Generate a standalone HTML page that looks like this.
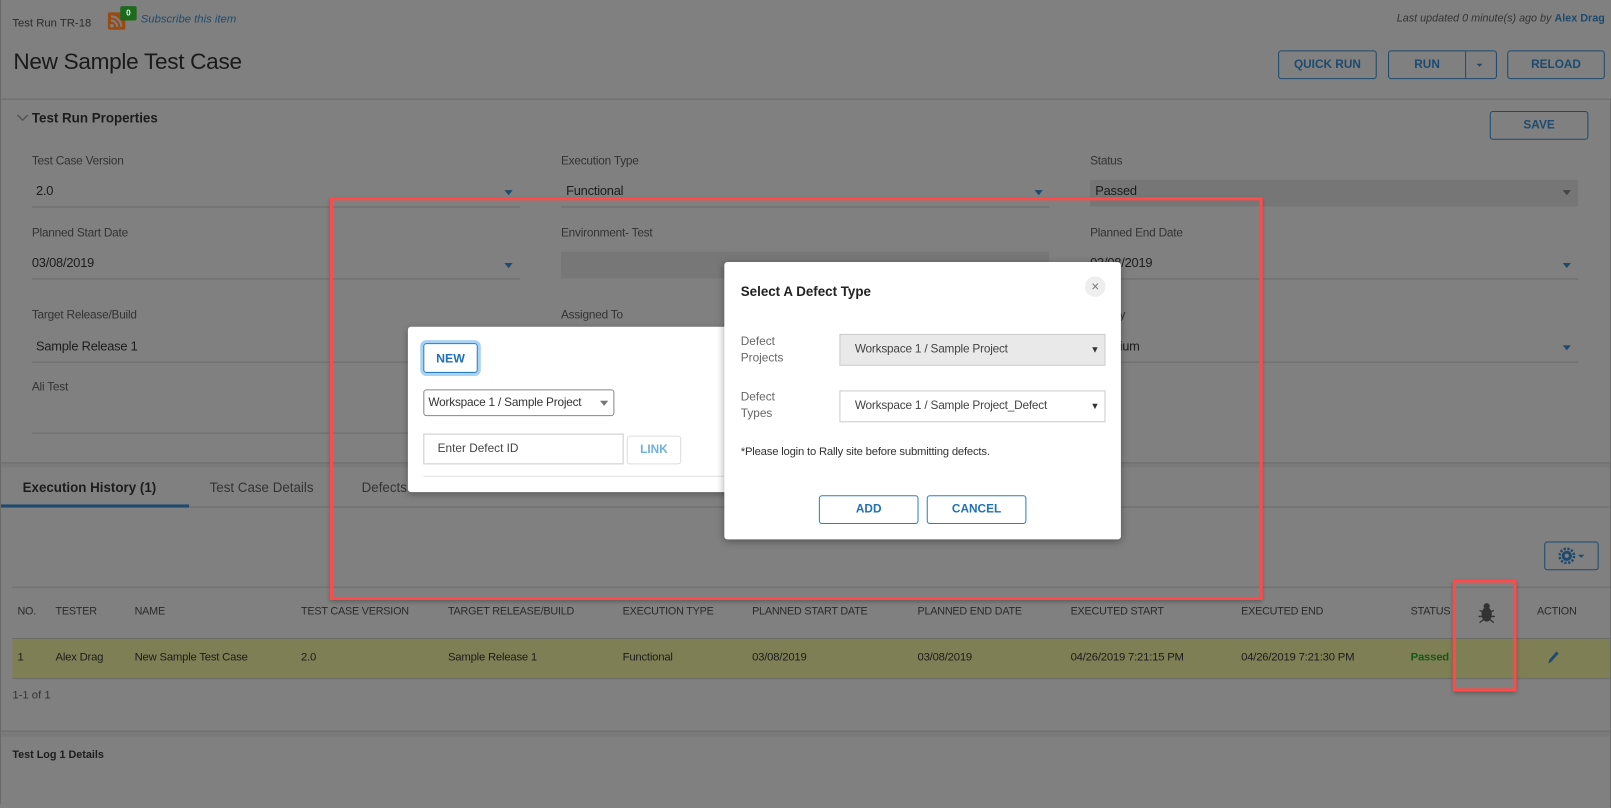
<!DOCTYPE html>
<html><head><meta charset="utf-8"><style>
*{box-sizing:border-box;margin:0;padding:0}
html,body{width:1611px;height:804px;overflow:hidden;background:#808080}
body{font-family:"Liberation Sans",sans-serif;color:#1c1c1c}
#w{position:absolute;left:0;top:0;width:1568px;height:783px;transform:scale(1.02742);transform-origin:0 0;background:#808080;border-left:1px solid #6a6a6a}
.a{position:absolute;white-space:nowrap}
.btn{position:absolute;border:1px solid #1d4a6e;border-radius:3px;color:#1d4a6e;font-weight:bold;font-size:11.5px;display:flex;align-items:center;justify-content:center}
.lbl{position:absolute;font-size:11.5px;color:#333;letter-spacing:-0.2px}
.val{position:absolute;font-size:12.5px;color:#1c1c1c;letter-spacing:-0.2px}
.ul{position:absolute;height:1px;background:#6c6c6c}
.car{position:absolute;width:0;height:0;border-left:4px solid transparent;border-right:4px solid transparent;border-top:5px solid #1d4a6e}
.th{position:absolute;top:589px;font-size:10.5px;color:#2a2a2a;letter-spacing:-0.2px}
.td{position:absolute;top:634px;font-size:11px;color:#1c1c1c;letter-spacing:-0.2px}
.red{position:absolute;border:3px solid #ff4a4a;box-shadow:0 2px 4px rgba(0,0,0,.3)}
.bb{position:absolute;border:1px solid #2a7fc4;border-radius:3px;color:#1f70b5;font-weight:bold;font-size:11.5px;display:flex;align-items:center;justify-content:center;background:#fff}
</style></head><body><div id="w">
<div class="a" style="left:11px;top:17px;font-size:11px;color:#2a2a2a">Test Run TR-18</div>
<div class="a" style="left:104px;top:12px;width:17px;height:17px;background:#9a4a14;border-radius:2px"></div>
<svg class="a" style="left:105px;top:13px" width="15" height="15"><circle cx="3" cy="12" r="1.8" fill="#7f7f7f"/><path d="M2 7a6 6 0 0 1 6 6M2 3a10 10 0 0 1 10 10" stroke="#7f7f7f" stroke-width="2" fill="none"/></svg>
<div class="a" style="left:116px;top:6px;width:16px;height:14px;background:#1d6a1d;border-radius:2px;color:#cfe;font-size:8px;font-weight:bold;text-align:center;line-height:14px">0</div>
<div class="a" style="left:136px;top:13px;font-size:11px;font-style:italic;color:#1d4a6e">Subscribe this item</div>
<div class="a" style="left:12px;top:47px;font-size:22px;color:#1a1a1a;letter-spacing:-0.3px">New Sample Test Case</div>
<div class="a" style="right:6px;top:12px;font-size:10.5px;font-style:italic;color:#333">Last updated 0 minute(s) ago by <b style="font-style:normal;color:#1d4a6e">Alex Drag</b></div>
<div class="btn" style="left:1243px;top:49px;width:96px;height:28px">QUICK RUN</div>
<div class="btn" style="left:1350px;top:49px;width:106px;height:28px;justify-content:flex-start"><span style="width:75px;text-align:center;border-right:1px solid #1d4a6e;line-height:26px">RUN</span><span class="car" style="left:85px;top:12px;border-width:3px 3px 0 3px"></span></div>
<div class="btn" style="left:1466px;top:49px;width:95px;height:28px">RELOAD</div>
<div class="a" style="left:0;top:96px;width:1568px;height:1px;background:#6a6a6a"></div>
<div class="a" style="left:1566px;top:96px;width:1px;height:690px;background:#6a6a6a"></div>
<svg class="a" style="left:15px;top:110px" width="12" height="10"><path d="M1 2l5 5 5-5" stroke="#555" stroke-width="1.5" fill="none"/></svg>
<div class="a" style="left:30px;top:107px;font-size:13px;font-weight:bold;color:#1c1c1c">Test Run Properties</div>
<div class="btn" style="left:1449px;top:108px;width:96px;height:28px">SAVE</div>

<div class="lbl" style="left:30px;top:151px">Test Case Version</div>
<div class="val" style="left:34px;top:179px">2.0</div><div class="car" style="left:490px;top:185px"></div><div class="ul" style="left:30px;top:201px;width:475px"></div>
<div class="lbl" style="left:545px;top:151px">Execution Type</div>
<div class="val" style="left:550px;top:179px">Functional</div><div class="car" style="left:1006px;top:185px"></div><div class="ul" style="left:545px;top:201px;width:475px"></div>
<div class="lbl" style="left:1060px;top:151px">Status</div>
<div class="a" style="left:1060px;top:175px;width:475px;height:26px;background:#767676"></div>
<div class="val" style="left:1065px;top:179px">Passed</div><div class="car" style="left:1520px;top:185px;border-top-color:#444"></div>

<div class="lbl" style="left:30px;top:221px">Planned Start Date</div>
<div class="val" style="left:30px;top:249px">03/08/2019</div><div class="car" style="left:490px;top:256px"></div><div class="ul" style="left:30px;top:271px;width:475px"></div>
<div class="lbl" style="left:545px;top:221px">Environment- Test</div>
<div class="a" style="left:545px;top:245px;width:475px;height:26px;background:#777"></div>
<div class="lbl" style="left:1060px;top:221px">Planned End Date</div>
<div class="val" style="left:1060px;top:249px">03/08/2019</div><div class="car" style="left:1520px;top:256px"></div><div class="ul" style="left:1060px;top:271px;width:475px"></div>

<div class="lbl" style="left:30px;top:301px">Target Release/Build</div>
<div class="val" style="left:34px;top:330px">Sample Release 1</div><div class="ul" style="left:30px;top:352px;width:475px"></div>
<div class="lbl" style="left:545px;top:301px">Assigned To</div>
<div class="lbl" style="left:1060px;top:301px">Priority</div>
<div class="val" style="left:1065px;top:330px">Medium</div><div class="car" style="left:1520px;top:336px"></div><div class="ul" style="left:1060px;top:352px;width:475px"></div>
<div class="lbl" style="left:30px;top:371px">Ali Test</div><div class="ul" style="left:30px;top:421px;width:475px"></div>

<div class="a" style="left:0;top:450px;width:1566px;height:5px;background:#7a7a7a;border-top:1px solid #6c6c6c"></div>
<div class="a" style="left:21px;top:467px;font-size:13px;font-weight:bold;color:#1c1c1c">Execution History (1)</div>
<div class="a" style="left:203px;top:467px;font-size:13px;color:#333">Test Case Details</div>
<div class="a" style="left:351px;top:467px;font-size:13px;color:#333">Defects</div>
<div class="a" style="left:0;top:493px;width:1566px;height:1px;background:#6c6c6c"></div>
<div class="a" style="left:0;top:491px;width:183px;height:3px;background:#1d4a6e"></div>
<div class="btn" style="left:1502px;top:527px;width:53px;height:28px">
<svg width="26" height="16"><circle cx="8" cy="8" r="5" fill="#1d4a6e"/><circle cx="8" cy="8" r="7" fill="none" stroke="#1d4a6e" stroke-width="2.5" stroke-dasharray="2.2 1.5"/><circle cx="8" cy="8" r="2" fill="#808080"/><path d="M19 7l3 3 3-3z" fill="#1d4a6e"/></svg></div>
<div class="a" style="left:11px;top:571px;width:1555px;height:1px;background:#6c6c6c"></div>

<div class="th" style="left:16px">NO.</div><div class="th" style="left:53px">TESTER</div><div class="th" style="left:130px">NAME</div><div class="th" style="left:292px">TEST CASE VERSION</div><div class="th" style="left:435px">TARGET RELEASE/BUILD</div><div class="th" style="left:605px">EXECUTION TYPE</div><div class="th" style="left:731px">PLANNED START DATE</div><div class="th" style="left:892px">PLANNED END DATE</div><div class="th" style="left:1041px">EXECUTED START</div><div class="th" style="left:1207px">EXECUTED END</div><div class="th" style="left:1372px">STATUS</div><div class="th" style="left:1495px">ACTION</div>
<svg class="a" style="left:1437px;top:585px" width="18" height="22"><ellipse cx="9" cy="13" rx="5" ry="7" fill="#333"/><circle cx="9" cy="5" r="3" fill="#333"/><path d="M2 9l4 2M16 9l-4 2M1 15h5M17 15h-5M2 21l4-3M16 21l-4-3" stroke="#333" stroke-width="1.3"/></svg>
<div class="a" style="left:11px;top:621px;width:1555px;height:40px;background:#7f7f56;border-top:1px solid #6c6c6c;border-bottom:1px solid #6c6c6c"></div>
<div class="td" style="left:16px">1</div><div class="td" style="left:53px">Alex Drag</div><div class="td" style="left:130px">New Sample Test Case</div><div class="td" style="left:292px">2.0</div><div class="td" style="left:435px">Sample Release 1</div><div class="td" style="left:605px">Functional</div><div class="td" style="left:731px">03/08/2019</div><div class="td" style="left:892px">03/08/2019</div><div class="td" style="left:1041px">04/26/2019 7:21:15 PM</div><div class="td" style="left:1207px">04/26/2019 7:21:30 PM</div><div class="td" style="left:1372px;color:#145a14;font-weight:bold">Passed</div>
<svg class="a" style="left:1503px;top:632px" width="14" height="16"><path d="M3 14l1-4 7-8 2 2-7 8z" fill="#1d4a6e"/></svg>
<div class="a" style="left:11px;top:671px;font-size:11px;color:#333">1-1 of 1</div>
<div class="a" style="left:0;top:711px;width:1566px;height:6px;background:#7a7a7a;border-top:1px solid #6c6c6c"></div>
<div class="a" style="left:11px;top:729px;font-size:10.5px;font-weight:bold;color:#1c1c1c">Test Log 1 Details</div>

<div class="red" style="left:320px;top:192px;width:908px;height:392px"></div>
<div class="red" style="left:1413px;top:564px;width:62px;height:109px"></div>

<div class="a" style="left:396px;top:318px;width:330px;height:161px;background:#fff;border-radius:3px;box-shadow:0 2px 6px rgba(0,0,0,.3)">
<div class="bb" style="left:15px;top:16px;width:53px;height:29px;box-shadow:0 0 0 3px #a9d3f5;font-size:12px">NEW</div>
<div class="a" style="left:15px;top:61px;width:186px;height:26px;border:1px solid #888;border-radius:3px;font-size:11.5px;color:#333;padding:6px 0 0 4px;letter-spacing:-0.2px">Workspace 1 / Sample Project<span class="car" style="left:171px;top:10px;border-top-color:#777"></span></div>
<div class="a" style="left:15px;top:104px;width:195px;height:30px;border:1px solid #ccc;font-size:11.5px;color:#444;padding:8px 0 0 13px">Enter Defect ID</div>
<div class="a" style="left:213px;top:106px;width:53px;height:28px;border:1px solid #ddd;border-radius:3px;font-size:11.5px;font-weight:bold;color:#6fb0e0;text-align:center;line-height:26px">LINK</div>
<div class="a" style="left:15px;top:145px;width:315px;height:1px;background:#e3e3e3"></div>
</div>

<div class="a" style="left:704px;top:255px;width:386px;height:270px;background:#fff;border-radius:3px;box-shadow:0 2px 8px rgba(0,0,0,.35)">
<div class="a" style="left:16px;top:21px;font-size:13px;font-weight:bold;color:#222">Select A Defect Type</div>
<div class="a" style="left:351px;top:14px;width:20px;height:20px;border-radius:50%;background:#eee;color:#777;font-size:13px;text-align:center;line-height:19px">×</div>
<div class="a" style="left:16px;top:70px;font-size:11.5px;color:#666;line-height:16px">Defect<br>Projects</div>
<div class="a" style="left:112px;top:70px;width:259px;height:31px;background:#e9e9e9;border:1px solid #ccc;font-size:11.5px;color:#444;padding:8px 0 0 14px;letter-spacing:-0.2px">Workspace 1 / Sample Project<span style="position:absolute;right:5px;top:9px;font-size:9px;color:#333">▼</span></div>
<div class="a" style="left:16px;top:124px;font-size:11.5px;color:#666;line-height:16px">Defect<br>Types</div>
<div class="a" style="left:112px;top:125px;width:259px;height:31px;background:#fff;border:1px solid #ccc;font-size:11.5px;color:#444;padding:8px 0 0 14px;letter-spacing:-0.2px">Workspace 1 / Sample Project_Defect<span style="position:absolute;right:5px;top:9px;font-size:9px;color:#333">▼</span></div>
<div class="a" style="left:16px;top:179px;font-size:11px;color:#333;letter-spacing:-0.2px">*Please login to Rally site before submitting defects.</div>
<div class="bb" style="left:92px;top:227px;width:97px;height:28px">ADD</div>
<div class="bb" style="left:197px;top:227px;width:97px;height:28px">CANCEL</div>
</div>
</div></body></html>
